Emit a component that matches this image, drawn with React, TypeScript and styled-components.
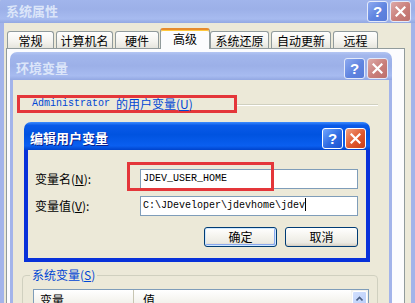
import React from 'react';
import styled, { createGlobalStyle, css } from 'styled-components';

const GlobalStyle = createGlobalStyle`
  html, body {
    margin: 0;
    padding: 0;
    background: #ece9d8;
  }
  body {
    font-family: "Noto Sans CJK SC", "Noto Sans", sans-serif;
    font-size: 12px;
    color: #000;
  }
  * {
    box-sizing: border-box;
  }
`;

const activeTitle =
  'linear-gradient(#3d8cff 0%, #0a5ae8 12%, #0053e0 45%, #0a5ff0 85%, #0043cc 100%)';
const inactiveTitle =
  'linear-gradient(#b4c6f3 0%, #a2b6ec 12%, #9cb0e8 50%, #a7bbf0 85%, #93a8e2 100%)';

const Screen = styled.div`
  width: 415px;
  height: 303px;
  overflow: hidden;
  background: #ece9d8;
`;

const Window = styled.div<{ $w: number }>`
  width: ${p => p.$w}px;
  flex-shrink: 0;
  border-radius: 7px 7px 0 0;
  overflow: hidden;
`;

const OuterWindow = styled(Window)`
  margin-top: -5px;
`;

const EditWindow = styled(Window)`
  margin: 9px 0 0 11px;
`;

const TitleBar = styled.div<{ $active?: boolean }>`
  height: 28px;
  display: flex;
  align-items: center;
  padding: 4px 4px 0 6px;
  background: ${p => (p.$active ? activeTitle : inactiveTitle)};
`;

const TitleText = styled.span<{ $active?: boolean }>`
  flex: 1;
  font-size: 13px;
  font-weight: 700;
  line-height: 16px;
  color: ${p => (p.$active ? '#fff' : '#dbe5f9')};
  text-shadow: ${p => (p.$active ? '1px 1px 0 #0a1f8c' : 'none')};
`;

const CapButtons = styled.div`
  display: flex;
  gap: 2px;
`;

const CapButton = styled.div<{ $kind: 'help' | 'close'; $active?: boolean }>`
  width: 21px;
  height: 21px;
  border: 1px solid ${p => (p.$active ? '#fff' : '#e4eafa')};
  border-radius: 3px;
  display: flex;
  align-items: center;
  justify-content: center;
  color: #fff;
  font-family: "Liberation Sans", sans-serif;
  font-weight: 700;
  font-size: 15px;
  ${p =>
    p.$kind === 'help'
      ? css`
          background: ${p.$active
            ? 'linear-gradient(135deg, #6fa6ff, #2f6be2 55%, #1c52d0)'
            : 'linear-gradient(135deg, #8eaaf0, #5f84e0 55%, #587bd8)'};
        `
      : css`
          background: ${p.$active
            ? 'linear-gradient(135deg, #f0a080, #e0582e 55%, #c83e18)'
            : 'linear-gradient(135deg, #ddaaa8, #c97e7a 55%, #bd706c)'};
        `}
`;

const Frame = styled.div<{ $active?: boolean; $b: number }>`
  border-style: solid;
  border-color: ${p => (p.$active ? '#0831d9' : '#a3b4ea')};
  border-width: 0 ${p => p.$b}px ${p => p.$b}px;
  background: #ece9d8;
`;

const OuterBody = styled.div`
  padding: 5px 6px 0 2px;
`;

const TabRow = styled.div`
  display: flex;
  align-items: flex-end;
  height: 20px;
  padding-left: 1px;
`;

const Tab = styled.div<{ $w: number; $on?: boolean }>`
  width: ${p => p.$w}px;
  height: 17px;
  margin-right: 2px;
  border: 1px solid #919b9c;
  border-bottom: none;
  border-radius: 3px 3px 0 0;
  background: linear-gradient(#fefefe, #f4f3ee 60%, #e6e5dd);
  text-align: center;
  line-height: 18px;
  white-space: nowrap;
  ${p =>
    p.$on &&
    css`
      height: 21px;
      margin: 0 0 -1px -1px;
      position: relative;
      z-index: 1;
      background: #fcfcfe;
      border-top: 2px solid #e68b2c;
      box-shadow: inset 0 1px 0 #ffc73c;
      line-height: 18px;
    `}
`;

const TabPanel = styled.div`
  height: 262px;
  border: 1px solid #919b9c;
  background: #fcfcfe;
  padding: 3px 0 0 3px;
`;

const EnvBody = styled.div`
  padding: 15px 0 20px 0;
`;

const GroupHead = styled.div`
  display: flex;
  margin: 0 11px 0 4px;
`;

const Mark = styled.span`
  display: flex;
  align-items: center;
  width: 220px;
  height: 18px;
  padding-left: 12px;
  border: 3px solid #e4363a;
  color: #0046d5;
  line-height: 12px;
  white-space: nowrap;
`;

const Mono = styled.span`
  font-family: "Liberation Mono", monospace;
  font-size: 10px;
`;

const GroupLine = styled.div`
  flex: 1;
  height: 2px;
  margin-top: 9px;
  border-top: 1px solid #d0d0bf;
  border-bottom: 1px solid #fff;
`;

const EditBody = styled.div`
  display: flex;
  flex-direction: column;
  gap: 7px;
  padding: 19px 8px 11px 7px;
`;

const FieldRow = styled.div`
  position: relative;
  display: flex;
  align-items: center;
  height: 20px;
`;

const FieldLabel = styled.span`
  width: 105px;
  line-height: 14px;
  white-space: nowrap;
`;

const TextBox = styled.div`
  width: 218px;
  height: 20px;
  border: 1px solid #7f9db9;
  background: #fff;
  padding-left: 2px;
  font-family: "Liberation Mono", monospace;
  font-size: 10px;
  line-height: 18px;
  white-space: nowrap;
  overflow: hidden;
`;

const Caret = styled.span`
  display: inline-block;
  width: 1px;
  height: 13px;
  background: #000;
  vertical-align: -3px;
`;

const RedFrame = styled.div`
  position: absolute;
  left: 92px;
  top: -7px;
  width: 147px;
  height: 29px;
  border: 3px solid #e4363a;
`;

const ButtonRow = styled.div`
  display: flex;
  justify-content: flex-end;
  gap: 8px;
  margin-top: 4px;
`;

const PushButton = styled.button<{ $default?: boolean }>`
  width: 73px;
  height: 20px;
  padding: 0;
  font-family: inherit;
  font-size: 12px;
  line-height: 16px;
  color: #000;
  border: 1px solid #003c74;
  border-radius: 3px;
  background: linear-gradient(#ffffff, #f6f5f0 40%, #ecebe4 80%, #d8d2c6);
  box-shadow: ${p =>
    p.$default
      ? 'inset 0 0 0 1px #cee7ff, inset -1px -1px 0 1px #8aa8ee'
      : 'inset 0 -1px 0 #d6d0c5'};
`;

const SysGroup = styled.fieldset`
  width: 356px;
  min-width: 0;
  margin: 7px 0 0 9px;
  padding: 8px 8px 10px 10px;
  border: 1px solid #d0d0bf;
  border-radius: 4px;
`;

const Legend = styled.legend`
  margin-left: -3px;
  padding: 0 2px;
  color: #0046d5;
  font-size: 12px;
  line-height: 12px;
`;

const ListBox = styled.div`
  display: flex;
  height: 60px;
  border: 1px solid #7f9db9;
  background: #fff;
`;

const ListHead = styled.div`
  flex: 1;
  display: flex;
  height: 20px;
  background: linear-gradient(#ffffff, #f3f2ec 70%, #e6e4d8);
  border-bottom: 2px solid #d6d2c2;
`;

const HeadCell = styled.div<{ $w?: number; $pad: number }>`
  ${p => (p.$w ? `width: ${p.$w}px;` : 'flex: 1;')}
  padding-left: ${p => p.$pad}px;
  line-height: 20px;
  ${p => p.$w && 'border-right: 1px solid #c7c5b2;'}
`;

const ScrollCol = styled.div`
  width: 17px;
  background: #f4f3ee;
`;

const ScrollBtn = styled.div`
  width: 15px;
  height: 15px;
  margin: 1px;
  border: 1px solid #fff;
  border-radius: 2px;
  background: linear-gradient(135deg, #d2e0fd, #b9cefa);
  display: flex;
  align-items: center;
  justify-content: center;
`;

const CloseGlyph = () => (
  <svg width="11" height="11" viewBox="0 0 11 11">
    <path d="M1.5 1.5 L9.5 9.5 M9.5 1.5 L1.5 9.5" stroke="#fff" strokeWidth="2.2" strokeLinecap="square" />
  </svg>
);

const Caption: React.FC<{ title: string; active?: boolean }> = ({ title, active }) => (
  <TitleBar $active={active}>
    <TitleText $active={active}>{title}</TitleText>
    <CapButtons>
      <CapButton $kind="help" $active={active}>?</CapButton>
      <CapButton $kind="close" $active={active}>
        <CloseGlyph />
      </CapButton>
    </CapButtons>
  </TitleBar>
);

const tabs = [
  { label: '常规', w: 47 },
  { label: '计算机名', w: 57 },
  { label: '硬件', w: 44 },
  { label: '高级', w: 50, on: true },
  { label: '系统还原', w: 59 },
  { label: '自动更新', w: 60 },
  { label: '远程', w: 45 },
];

export default function App() {
  return (
    <>
      <GlobalStyle />
      <Screen>
        <OuterWindow $w={415}>
          <Caption title="系统属性" />
          <Frame $b={4}>
            <OuterBody>
              <TabRow>
                {tabs.map(t => (
                  <Tab key={t.label} $w={t.w} $on={t.on}>
                    {t.label}
                  </Tab>
                ))}
              </TabRow>
              <TabPanel>
                <Window $w={382}>
                  <Caption title="环境变量" />
                  <Frame $b={3}>
                    <EnvBody>
                      <GroupHead>
                        <Mark>
                          <Mono>Administrator&nbsp;</Mono>的用户变量(<u>U</u>)
                        </Mark>
                        <GroupLine />
                      </GroupHead>

                      <EditWindow $w={346}>
                        <Caption title="编辑用户变量" active />
                        <Frame $b={4} $active>
                          <EditBody>
                            <FieldRow>
                              <FieldLabel>变量名(<u>N</u>):</FieldLabel>
                              <TextBox>JDEV_USER_HOME</TextBox>
                              <RedFrame />
                            </FieldRow>
                            <FieldRow>
                              <FieldLabel>变量值(<u>V</u>):</FieldLabel>
                              <TextBox>
                                C:\JDeveloper\jdevhome\jdev<Caret />
                              </TextBox>
                            </FieldRow>
                            <ButtonRow>
                              <PushButton $default>确定</PushButton>
                              <PushButton>取消</PushButton>
                            </ButtonRow>
                          </EditBody>
                        </Frame>
                      </EditWindow>

                      <SysGroup>
                        <Legend>系统变量(<u>S</u>)</Legend>
                        <ListBox>
                          <ListHead>
                            <HeadCell $w={100} $pad={6}>变量</HeadCell>
                            <HeadCell $pad={9}>值</HeadCell>
                          </ListHead>
                          <ScrollCol>
                            <ScrollBtn>
                              <svg width="7" height="5" viewBox="0 0 7 5">
                                <path d="M0.5 4.5 L3.5 1.5 L6.5 4.5" fill="none" stroke="#4d6185" strokeWidth="1.6" />
                              </svg>
                            </ScrollBtn>
                          </ScrollCol>
                        </ListBox>
                      </SysGroup>
                    </EnvBody>
                  </Frame>
                </Window>
              </TabPanel>
            </OuterBody>
          </Frame>
        </OuterWindow>
      </Screen>
    </>
  );
}
